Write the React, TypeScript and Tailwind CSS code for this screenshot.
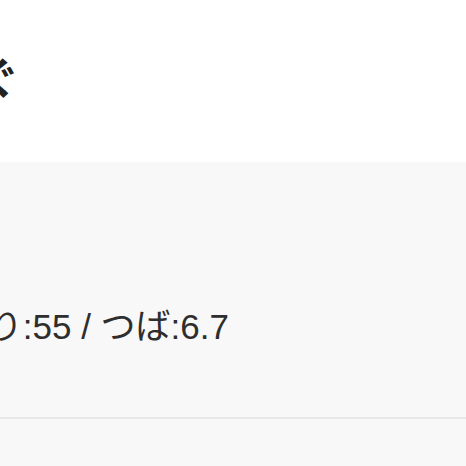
export default function App() {
  return (
    <div className="flex h-[466px] w-[466px] flex-col overflow-hidden bg-[#f8f8f8] font-['Liberation_Sans','Noto_Sans_CJK_JP',sans-serif] text-[#2e2e2e]">
      {/* 見出し */}
      <div className="h-[162px] shrink-0 bg-white pt-[48px]">
        <div className="flex w-[20px] justify-end whitespace-nowrap">
          <h1 className="font-['Noto_Sans_CJK_JP',sans-serif] text-[44px] font-bold leading-[56px] text-[#222222]">
            香りをつなぐ
          </h1>
        </div>
      </div>

      {/* スコア */}
      <div className="h-[255px] shrink-0 pt-[141px]">
        <div className="flex w-[229px] justify-end whitespace-nowrap">
          <p className="text-[35px] leading-[48px]">甘さ:70 / 香り:55 / つば:6.7</p>
        </div>
      </div>
      <div className="h-[2px] shrink-0 bg-[#e8e8e8]" />
    </div>
  );
}
